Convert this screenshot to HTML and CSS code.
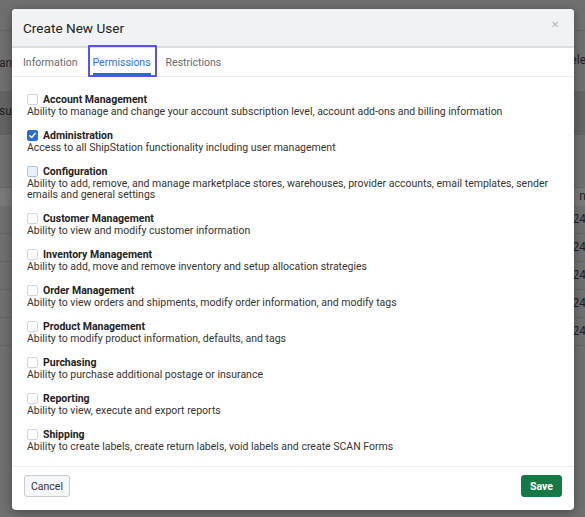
FILE: index.html
```html
<!DOCTYPE html>
<html>
<head>
<meta charset="utf-8">
<link rel="stylesheet" href="styles.css">
</head>
<body>
<div class="page">
  <div class="bg-top"></div>
  <div class="bg-row bg-row-a"><span class="bg-l">an</span><span class="bg-r">ele</span></div>
  <div class="bg-band"><span class="bg-l">su</span></div>
  <div class="bg-gap"></div>
  <div class="bg-head"><span class="bg-r">n</span></div>
  <div class="bg-cell"><span class="bg-r">24</span></div>
  <div class="bg-cell"><span class="bg-r">24</span></div>
  <div class="bg-cell"><span class="bg-r">24</span></div>
  <div class="bg-cell"><span class="bg-r">24</span></div>
  <div class="bg-cell"><span class="bg-r">24</span></div>
</div>

<div class="modal">
  <div class="modal-header">
    <h1 class="modal-title">Create New User</h1>
    <span class="close">&#x2715;</span>
  </div>
  <div class="tabs">
    <span class="tab">Information</span>
    <span class="tab active">Permissions</span>
    <span class="tab">Restrictions</span>
  </div>
  <div class="modal-body">
    <div class="perm">
      <div class="perm-label"><span class="cb"></span>Account Management</div>
      <div class="perm-desc">Ability to manage and change your account subscription level, account add-ons and billing information</div>
    </div>
    <div class="perm">
      <div class="perm-label"><span class="cb checked"><svg viewBox="0 0 12 12" width="9" height="9"><path d="M2.5 6.3 L5 8.6 L9.5 3.4" fill="none" stroke="#fff" stroke-width="1.8" stroke-linecap="round" stroke-linejoin="round"/></svg></span>Administration</div>
      <div class="perm-desc">Access to all ShipStation functionality including user management</div>
    </div>
    <div class="perm">
      <div class="perm-label"><span class="cb hover"></span>Configuration</div>
      <div class="perm-desc">Ability to add, remove, and manage marketplace stores, warehouses, provider accounts, email templates, sender emails and general settings</div>
    </div>
    <div class="perm">
      <div class="perm-label"><span class="cb"></span>Customer Management</div>
      <div class="perm-desc">Ability to view and modify customer information</div>
    </div>
    <div class="perm">
      <div class="perm-label"><span class="cb"></span>Inventory Management</div>
      <div class="perm-desc">Ability to add, move and remove inventory and setup allocation strategies</div>
    </div>
    <div class="perm">
      <div class="perm-label"><span class="cb"></span>Order Management</div>
      <div class="perm-desc">Ability to view orders and shipments, modify order information, and modify tags</div>
    </div>
    <div class="perm">
      <div class="perm-label"><span class="cb"></span>Product Management</div>
      <div class="perm-desc">Ability to modify product information, defaults, and tags</div>
    </div>
    <div class="perm">
      <div class="perm-label"><span class="cb"></span>Purchasing</div>
      <div class="perm-desc">Ability to purchase additional postage or insurance</div>
    </div>
    <div class="perm">
      <div class="perm-label"><span class="cb"></span>Reporting</div>
      <div class="perm-desc">Ability to view, execute and export reports</div>
    </div>
    <div class="perm">
      <div class="perm-label"><span class="cb"></span>Shipping</div>
      <div class="perm-desc">Ability to create labels, create return labels, void labels and create SCAN Forms</div>
    </div>
  </div>
  <div class="modal-footer">
    <button class="btn btn-cancel">Cancel</button>
    <button class="btn btn-save">Save</button>
  </div>
</div>
</body>
</html>
```
FILE: styles.css
```css
html, body {
  margin: 0;
  padding: 0;
}
body {
  width: 585px;
  height: 517px;
  overflow: hidden;
  background: #6f6f6f;
  font-family: Roboto, "Liberation Sans", Arial, sans-serif;
  position: relative;
}
.page {
  display: flex;
  flex-direction: column;
  color: #1e1e1e;
  font-size: 12px;
}
.bg-l, .bg-r { position: absolute; }
.page > div { position: relative; }
.bg-l { left: -1px; }
.bg-r { right: -1px; }
.bg-top {
  height: 30px;
  border-bottom: 1px solid #646464;
}
.bg-row-a {
  height: 60px;
  display: flex;
  align-items: center;
}
.bg-row-a .bg-l { top: 25px; }
.bg-row-a .bg-r { top: 22px; }
.bg-band {
  height: 44px;
  background: #636363;
}
.bg-band .bg-l { top: 13px; }
.bg-gap {
  height: 52px;
  border-bottom: 1px solid #676767;
}
.bg-head {
  height: 18px;
  background: #787878;
}
.bg-head .bg-r { top: 1px; }
.bg-cell {
  height: 27px;
  border-bottom: 1px solid #646464;
}
.bg-cell .bg-r { top: 6px; }

.modal {
  position: absolute;
  top: 9px;
  left: 12px;
  width: 562px;
  height: 501px;
  background: #fff;
  border-radius: 4px;
  box-shadow: 0 2px 10px rgba(0,0,0,0.35);
  display: flex;
  flex-direction: column;
}
.modal-header {
  height: 37px;
  background: #f1f2f4;
  border-bottom: 2px solid #dcdee2;
  border-radius: 4px 4px 0 0;
  display: flex;
  align-items: center;
  justify-content: space-between;
  padding: 0 15px 0 11px;
  flex-shrink: 0;
}
.modal-title {
  margin: 0;
  font-size: 13.6px;
  font-weight: 400;
  color: #222;
}
.close {
  color: #b4b8bf;
  font-size: 10px;
  margin-top: -6px;
}
.tabs {
  height: 28px;
  display: flex;
  gap: 15px;
  padding-left: 11px;
  border-bottom: 1px solid #ececec;
  flex-shrink: 0;
}
.tab {
  font-size: 10.5px;
  color: #666a70;
  display: flex;
  align-items: center;
  position: relative;
}
.tab.active {
  color: #2b73cc;
}
.tab.active::before {
  content: "";
  position: absolute;
  left: 0;
  right: 0;
  bottom: 0;
  height: 3px;
  background: #1f6fc9;
}
.tab.active::after {
  content: "";
  position: absolute;
  top: -3px;
  bottom: -1px;
  left: -5px;
  right: -6px;
  border: 2px solid #5b4ff0;
  border-radius: 1px;
}
.modal-body {
  padding: 15.5px 15px 0 15px;
  flex: 1;
}
.perm {
  margin-bottom: 11.5px;
}
.perm-label {
  display: flex;
  align-items: center;
  font-size: 10.5px;
  font-weight: 700;
  color: #222;
  line-height: 13px;
}
.cb {
  width: 9px;
  height: 9px;
  border: 1px solid #d3d5d9;
  border-radius: 2px;
  margin-right: 5px;
  display: flex;
  align-items: center;
  justify-content: center;
  background: #fff;
}
.cb.checked {
  background: #2a6ed5;
  border-color: #2a6ed5;
}
.cb.hover {
  background: #e9f0f9;
  border-color: #a9c2e4;
}
.perm-desc {
  font-size: 10.5px;
  line-height: 11.5px;
  color: #333;
}
.modal-footer {
  height: 44px;
  border-top: 1px solid #eceef0;
  display: flex;
  align-items: flex-start;
  justify-content: space-between;
  padding: 8px 12px 0 12px;
  box-sizing: border-box;
  flex-shrink: 0;
}
.btn {
  height: 22px;
  font-family: Roboto, "Liberation Sans", Arial, sans-serif;
  font-size: 10.5px;
  border-radius: 3px;
  cursor: pointer;
}
.btn-cancel {
  padding: 0 6px;
  background: #f5f6f8;
  border: 1px solid #c7cad0;
  color: #333;
}
.btn-save {
  padding: 0 8px;
  background: #157a45;
  border: 1px solid #157a45;
  color: #fff;
  font-weight: 700;
}
```
